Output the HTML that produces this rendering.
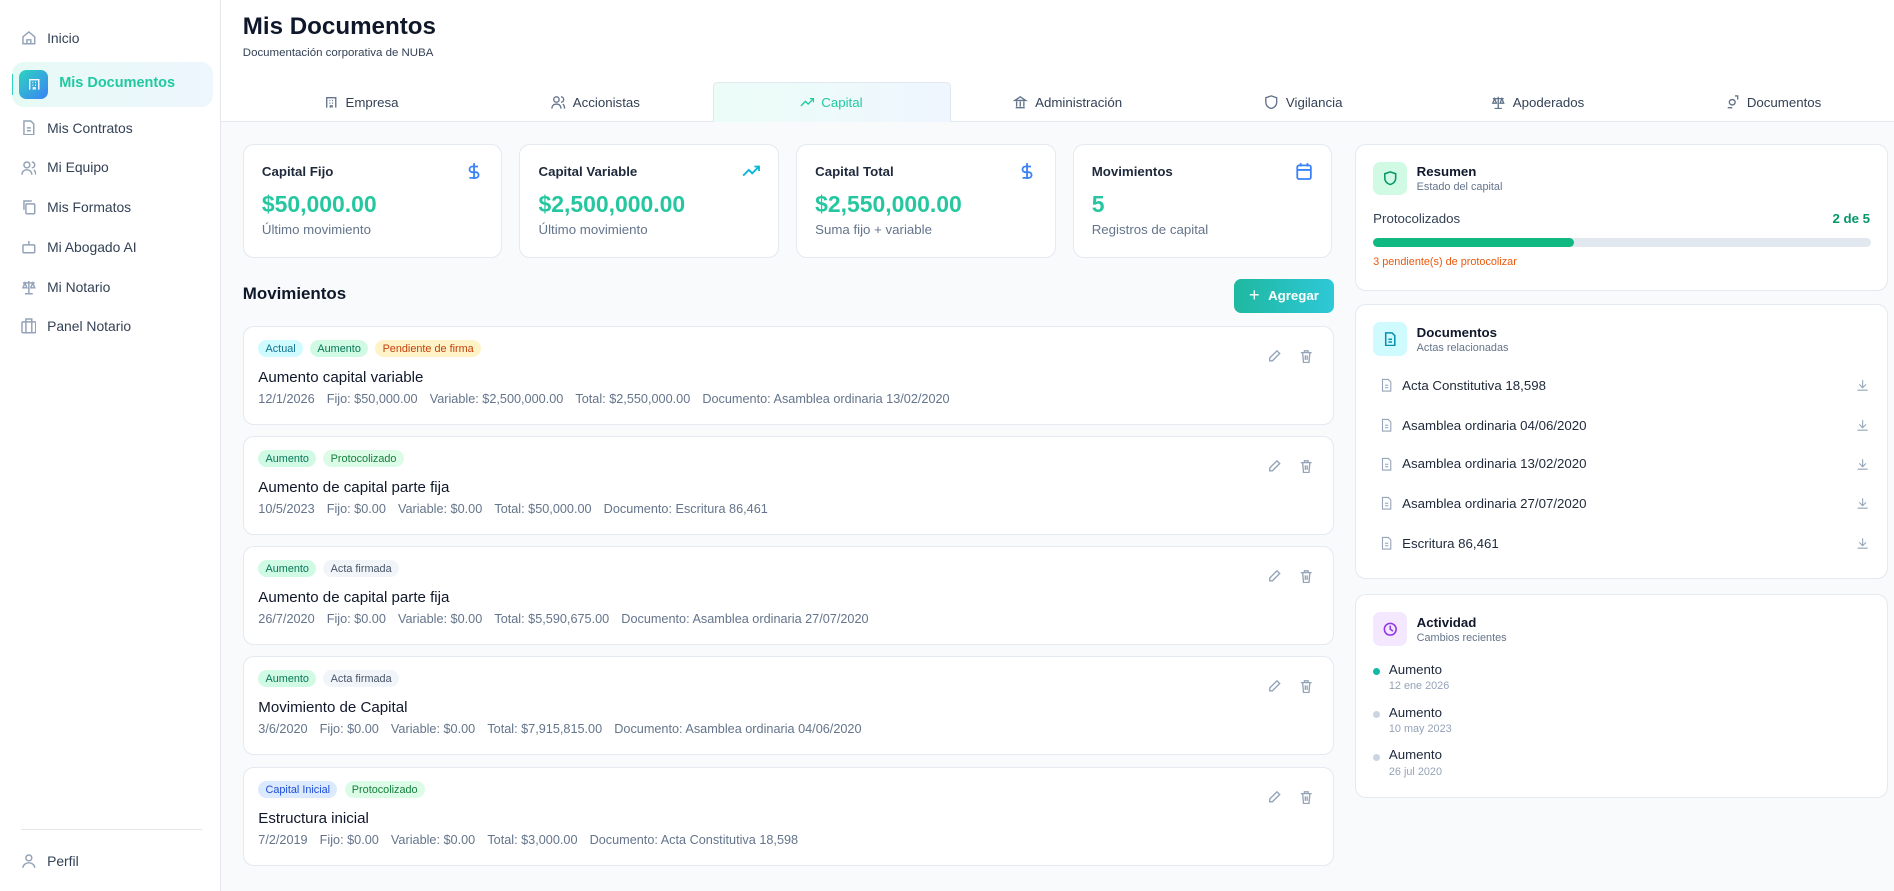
<!DOCTYPE html>
<html><head><meta charset="utf-8"><style>
*{box-sizing:border-box;margin:0;padding:0}
html,body{width:1894px;height:891px;overflow:hidden;background:#f8fafc}
body{font-family:"Liberation Sans",Arial,sans-serif;color:#0f172a}
#r{zoom:1.20791;width:1568px;height:738px;position:relative;background:#f8fafc}
.a{position:absolute}
.side{left:0;top:0;width:183px;height:738px;background:#fff;border-right:1px solid #e5e7eb}
.ni{position:absolute;left:17px;font-size:11.5px;color:#334155;display:flex;align-items:center;gap:9px}
.ni svg{width:13px;height:13px;stroke:#94a3b8;fill:none;stroke-width:1.5}
.hdr{left:183px;top:0;width:1385px;height:101px;background:#fff;border-bottom:1px solid #e2e8f0}
.tab{position:absolute;top:68px;height:33px;width:196px;display:flex;align-items:center;justify-content:center;gap:6px;font-size:11px;color:#334155}
.tab svg{width:12px;height:12px;stroke:#64748b;fill:none;stroke-width:1.5}
.card{position:absolute;background:#fff;border:1px solid #e5e9f0;border-radius:9px}
.st .t{position:absolute;left:15px;top:16px;font-size:11px;font-weight:bold;color:#1e293b}
.st .v{position:absolute;left:15px;top:38px;font-size:19px;font-weight:bold;color:#26c7a0}
.st .s{position:absolute;left:15px;top:64px;font-size:11px;color:#64748b}
.st svg{position:absolute;right:15px;top:14px;width:15px;height:15px;fill:none;stroke-width:1.6}
.mv .tags{position:absolute;left:12px;top:11px;display:flex;gap:6px}
.tag{font-size:9px;padding:2px 6px;border-radius:8px;line-height:10px}
.mv .ti{position:absolute;left:12px;top:35px;font-size:12.5px;color:#0f172a}
.mv .d{position:absolute;left:12px;top:54px;font-size:10.5px;color:#64748b}
.mv .d span{margin-right:10px}
.mv .ic{position:absolute;right:16px;top:18px;display:flex;gap:14px}
.mv .ic svg{width:12px;height:12px;stroke:#94a3b8;fill:none;stroke-width:1.5}
.rh{position:absolute;left:14px;top:14px;width:28px;height:28px;border-radius:6px;display:flex;align-items:center;justify-content:center}
.rh svg{width:12px;height:12px;fill:none;stroke-width:1.7}
.rt{position:absolute;left:50px;top:16px;font-size:11px;font-weight:bold}
.rs{position:absolute;left:50px;top:30px;font-size:9px;color:#64748b}
.doc{position:absolute;left:20px;font-size:11px;color:#1e293b;display:flex;align-items:center;gap:7px;width:405px}
.doc svg{width:11px;height:12px;stroke:#94a3b8;fill:none;stroke-width:1.3}
.doc .dl{position:absolute;right:0}
.act{position:absolute;left:14px}
.act i{position:absolute;left:0;top:5px;width:6px;height:6px;border-radius:3px}
.act b{position:absolute;left:13px;top:0;font-weight:normal;font-size:11px;color:#1e293b;white-space:nowrap}
.act s{position:absolute;left:13px;top:15px;text-decoration:none;font-size:9px;color:#94a3b8;white-space:nowrap}
</style></head><body><div id="r">
<div class="a side">
 <div class="ni" style="top:25px"><svg viewBox="0 0 16 16"><path d="M2 7l6-5 6 5v7H2z M6 14v-4h4v4"/></svg>Inicio</div>
 <div class="a" style="left:10px;top:51px;width:166px;height:38px;border-radius:10px;background:linear-gradient(90deg,#e6faf5,#eef6fe)"></div>
 <div class="a" style="left:10px;top:61px;width:1px;height:18px;background:#2dd4bf"></div>
 <div class="a" style="left:16px;top:58px;width:24px;height:24px;border-radius:6px;background:linear-gradient(135deg,#2dd4bf,#3b82f6)"><svg viewBox="0 0 16 16" style="position:absolute;left:6px;top:6px;width:12px;height:12px;fill:none;stroke:#fff;stroke-width:1.5"><path d="M3 14V3h10v11M6 6h1M9 6h1M6 9h1M9 9h1M7 14v-2h2v2"/></svg></div>
 <div class="a" style="left:49px;top:62px;font-size:12px;font-weight:bold;color:#20c9a0">Mis Documentos</div>
 <div class="ni" style="top:99px"><svg viewBox="0 0 16 16"><path d="M3 1h7l3 3v11H3z M6 8h4M6 11h4"/></svg>Mis Contratos</div>
 <div class="ni" style="top:132px"><svg viewBox="0 0 16 16"><circle cx="6" cy="5" r="3"/><path d="M1 15c0-3 2-5 5-5s5 2 5 5M11 2a3 3 0 010 6M13 10c1.5 1 2 3 2 5"/></svg>Mi Equipo</div>
 <div class="ni" style="top:165px"><svg viewBox="0 0 16 16"><rect x="5" y="5" width="9" height="10" rx="1"/><path d="M3 11V2h8"/></svg>Mis Formatos</div>
 <div class="ni" style="top:198px"><svg viewBox="0 0 16 16"><rect x="2" y="6" width="12" height="8" rx="1"/><path d="M8 6V2M6 10h0M10 10h0"/></svg>Mi Abogado AI</div>
 <div class="ni" style="top:231px"><svg viewBox="0 0 16 16"><path d="M8 2v13M4 15h8M2 4h12M4 4l-2 5h4zM12 4l-2 5h4z"/></svg>Mi Notario</div>
 <div class="ni" style="top:263px"><svg viewBox="0 0 16 16"><rect x="1" y="4" width="14" height="11" rx="1"/><path d="M5 4V1h6v3M5 4v11M11 4v11"/></svg>Panel Notario</div>
 <div class="a" style="left:17px;top:686px;width:150px;height:1px;background:#e5e7eb"></div>
 <div class="ni" style="top:706px"><svg viewBox="0 0 16 16"><circle cx="8" cy="5" r="3"/><path d="M2 15c0-3 3-5 6-5s6 2 6 5"/></svg>Perfil</div>
</div>
<div class="a hdr"></div>
<div class="a" style="left:201px;top:11px;font-size:20px;font-weight:bold;color:#0f172a">Mis Documentos</div>
<div class="a" style="left:201px;top:39px;font-size:9.5px;color:#334155">Documentación corporativa de NUBA</div>
<div class="a" style="left:590px;top:68px;width:197px;height:33px;border:1px solid #e2e8f0;border-bottom:none;border-radius:4px 4px 0 0;background:linear-gradient(90deg,#ecfdf7,#eff6ff)"></div>
<div class="tab" style="left:201px"><svg viewBox="0 0 16 16"><path d="M3 14V3h10v11M6 6h1M9 6h1M6 9h1M9 9h1M7 14v-2h2v2"/></svg>Empresa</div>
<div class="tab" style="left:395px"><svg viewBox="0 0 16 16"><circle cx="6" cy="5" r="3"/><path d="M1 15c0-3 2-5 5-5s5 2 5 5M11 2a3 3 0 010 6M13 10c1.5 1 2 3 2 5"/></svg>Accionistas</div>
<div class="tab" style="left:590px;color:#20c9a0"><svg viewBox="0 0 16 16" style="stroke:#20c9a0"><path d="M1 12l5-5 3 3 6-6M11 4h4v4"/></svg>Capital</div>
<div class="tab" style="left:786px"><svg viewBox="0 0 16 16"><path d="M2 6l6-4 6 4zM3 14h10M4 7v6M8 7v6M12 7v6"/></svg>Administración</div>
<div class="tab" style="left:981px"><svg viewBox="0 0 16 16"><path d="M8 1l6 2v5c0 4-3 6-6 7-3-1-6-3-6-7V3z"/></svg>Vigilancia</div>
<div class="tab" style="left:1175px"><svg viewBox="0 0 16 16"><path d="M8 2v13M4 15h8M2 4h12M4 4l-2 5h4zM12 4l-2 5h4z"/></svg>Apoderados</div>
<div class="tab" style="left:1370px"><svg viewBox="0 0 16 16"><path d="M6 10a3 3 0 100-4M10 6a3 3 0 100 4M3 14h5M11 1h3v4"/></svg>Documentos</div>

<div class="card st" style="left:201px;top:119px;width:215px;height:95px"><div class="t">Capital Fijo</div><svg viewBox="0 0 16 16" stroke="#3b82f6"><path d="M8 1v14M11.5 4H6.5a2.5 2.5 0 000 5h3a2.5 2.5 0 010 5H4"/></svg><div class="v">$50,000.00</div><div class="s">Último movimiento</div></div>
<div class="card st" style="left:430px;top:119px;width:215px;height:95px"><div class="t">Capital Variable</div><svg viewBox="0 0 16 16" stroke="#06b6d4"><path d="M1 12l5-5 3 3 6-6M11 4h4v4"/></svg><div class="v">$2,500,000.00</div><div class="s">Último movimiento</div></div>
<div class="card st" style="left:659px;top:119px;width:215px;height:95px"><div class="t">Capital Total</div><svg viewBox="0 0 16 16" stroke="#3b82f6"><path d="M8 1v14M11.5 4H6.5a2.5 2.5 0 000 5h3a2.5 2.5 0 010 5H4"/></svg><div class="v">$2,550,000.00</div><div class="s">Suma fijo + variable</div></div>
<div class="card st" style="left:888px;top:119px;width:215px;height:95px"><div class="t">Movimientos</div><svg viewBox="0 0 16 16" stroke="#3b82f6"><rect x="2" y="3" width="12" height="12" rx="1.5"/><path d="M2 7h12M5 1v3M11 1v3"/></svg><div class="v">5</div><div class="s">Registros de capital</div></div>

<div class="a" style="left:201px;top:235px;font-size:14px;font-weight:bold">Movimientos</div>
<div class="a" style="left:1022px;top:231px;width:82px;height:28px;border-radius:6px;background:linear-gradient(90deg,#1fb8a0,#2ec8d8);color:#fff;font-size:11px;font-weight:bold;display:flex;align-items:center;justify-content:center;gap:7px"><span style="font-size:15px;font-weight:normal">+</span>Agregar</div>

<div class="card mv" style="left:201px;top:270px;width:903px;height:82px"><div class="tags"><span class="tag" style="background:#cffafe;color:#0e7490">Actual</span><span class="tag" style="background:#d1fae5;color:#047857">Aumento</span><span class="tag" style="background:#fef3c7;color:#c2410c">Pendiente de firma</span></div><div class="ti">Aumento capital variable</div><div class="d"><span>12/1/2026</span><span>Fijo: $50,000.00</span><span>Variable: $2,500,000.00</span><span>Total: $2,550,000.00</span><span>Documento: Asamblea ordinaria 13/02/2020</span></div><div class="ic"><svg viewBox="0 0 16 16"><path d="M11 2l3 3-8 8H3v-3z"/></svg><svg viewBox="0 0 16 16"><path d="M2 4h12M6 4V2h4v2M4 4l1 11h6l1-11M7 7v5M9 7v5"/></svg></div></div>
<div class="card mv" style="left:201px;top:361px;width:903px;height:82px"><div class="tags"><span class="tag" style="background:#d1fae5;color:#047857">Aumento</span><span class="tag" style="background:#dcfce7;color:#15803d">Protocolizado</span></div><div class="ti">Aumento de capital parte fija</div><div class="d"><span>10/5/2023</span><span>Fijo: $0.00</span><span>Variable: $0.00</span><span>Total: $50,000.00</span><span>Documento: Escritura 86,461</span></div><div class="ic"><svg viewBox="0 0 16 16"><path d="M11 2l3 3-8 8H3v-3z"/></svg><svg viewBox="0 0 16 16"><path d="M2 4h12M6 4V2h4v2M4 4l1 11h6l1-11M7 7v5M9 7v5"/></svg></div></div>
<div class="card mv" style="left:201px;top:452px;width:903px;height:82px"><div class="tags"><span class="tag" style="background:#d1fae5;color:#047857">Aumento</span><span class="tag" style="background:#f1f5f9;color:#475569">Acta firmada</span></div><div class="ti">Aumento de capital parte fija</div><div class="d"><span>26/7/2020</span><span>Fijo: $0.00</span><span>Variable: $0.00</span><span>Total: $5,590,675.00</span><span>Documento: Asamblea ordinaria 27/07/2020</span></div><div class="ic"><svg viewBox="0 0 16 16"><path d="M11 2l3 3-8 8H3v-3z"/></svg><svg viewBox="0 0 16 16"><path d="M2 4h12M6 4V2h4v2M4 4l1 11h6l1-11M7 7v5M9 7v5"/></svg></div></div>
<div class="card mv" style="left:201px;top:543px;width:903px;height:82px"><div class="tags"><span class="tag" style="background:#d1fae5;color:#047857">Aumento</span><span class="tag" style="background:#f1f5f9;color:#475569">Acta firmada</span></div><div class="ti">Movimiento de Capital</div><div class="d"><span>3/6/2020</span><span>Fijo: $0.00</span><span>Variable: $0.00</span><span>Total: $7,915,815.00</span><span>Documento: Asamblea ordinaria 04/06/2020</span></div><div class="ic"><svg viewBox="0 0 16 16"><path d="M11 2l3 3-8 8H3v-3z"/></svg><svg viewBox="0 0 16 16"><path d="M2 4h12M6 4V2h4v2M4 4l1 11h6l1-11M7 7v5M9 7v5"/></svg></div></div>
<div class="card mv" style="left:201px;top:635px;width:903px;height:82px"><div class="tags"><span class="tag" style="background:#dbeafe;color:#1d4ed8">Capital Inicial</span><span class="tag" style="background:#dcfce7;color:#15803d">Protocolizado</span></div><div class="ti">Estructura inicial</div><div class="d"><span>7/2/2019</span><span>Fijo: $0.00</span><span>Variable: $0.00</span><span>Total: $3,000.00</span><span>Documento: Acta Constitutiva 18,598</span></div><div class="ic"><svg viewBox="0 0 16 16"><path d="M11 2l3 3-8 8H3v-3z"/></svg><svg viewBox="0 0 16 16"><path d="M2 4h12M6 4V2h4v2M4 4l1 11h6l1-11M7 7v5M9 7v5"/></svg></div></div>

<div class="card" style="left:1122px;top:119px;width:441px;height:122px">
 <div class="rh" style="background:#d1fae5"><svg viewBox="0 0 16 16" stroke="#059669"><path d="M8 1l6 2v5c0 4-3 6-6 7-3-1-6-3-6-7V3z"/></svg></div>
 <div class="rt">Resumen</div><div class="rs">Estado del capital</div>
 <div class="a" style="left:14px;top:55px;font-size:11px;color:#334155">Protocolizados</div>
 <div class="a" style="right:14px;top:55px;font-size:11px;font-weight:bold;color:#059669">2 de 5</div>
 <div class="a" style="left:14px;top:77px;width:412px;height:8px;border-radius:4px;background:#e2e8f0"><div style="width:166px;height:8px;border-radius:4px;background:#10b981"></div></div>
 <div class="a" style="left:14px;top:92px;font-size:9px;color:#ea580c">3 pendiente(s) de protocolizar</div>
</div>
<div class="card" style="left:1122px;top:252px;width:441px;height:227px">
 <div class="rh" style="background:#cffafe"><svg viewBox="0 0 16 16" stroke="#0891b2"><path d="M3 1h7l3 3v11H3z M6 8h4M6 11h4"/></svg></div>
 <div class="rt">Documentos</div><div class="rs">Actas relacionadas</div>
 <div class="doc" style="top:60px"><svg viewBox="0 0 16 16"><path d="M3 1h7l3 3v11H3z M6 8h4M6 11h4"/></svg>Acta Constitutiva 18,598<svg class="dl" viewBox="0 0 16 16"><path d="M8 2v9M4 7l4 4 4-4M2 14h12"/></svg></div>
 <div class="doc" style="top:93px"><svg viewBox="0 0 16 16"><path d="M3 1h7l3 3v11H3z M6 8h4M6 11h4"/></svg>Asamblea ordinaria 04/06/2020<svg class="dl" viewBox="0 0 16 16"><path d="M8 2v9M4 7l4 4 4-4M2 14h12"/></svg></div>
 <div class="doc" style="top:125px"><svg viewBox="0 0 16 16"><path d="M3 1h7l3 3v11H3z M6 8h4M6 11h4"/></svg>Asamblea ordinaria 13/02/2020<svg class="dl" viewBox="0 0 16 16"><path d="M8 2v9M4 7l4 4 4-4M2 14h12"/></svg></div>
 <div class="doc" style="top:158px"><svg viewBox="0 0 16 16"><path d="M3 1h7l3 3v11H3z M6 8h4M6 11h4"/></svg>Asamblea ordinaria 27/07/2020<svg class="dl" viewBox="0 0 16 16"><path d="M8 2v9M4 7l4 4 4-4M2 14h12"/></svg></div>
 <div class="doc" style="top:191px"><svg viewBox="0 0 16 16"><path d="M3 1h7l3 3v11H3z M6 8h4M6 11h4"/></svg>Escritura 86,461<svg class="dl" viewBox="0 0 16 16"><path d="M8 2v9M4 7l4 4 4-4M2 14h12"/></svg></div>
</div>
<div class="card" style="left:1122px;top:492px;width:441px;height:169px">
 <div class="rh" style="background:#f3e8ff"><svg viewBox="0 0 16 16" stroke="#9333ea"><circle cx="8" cy="8" r="6.5"/><path d="M8 4v4l3 2"/></svg></div>
 <div class="rt">Actividad</div><div class="rs">Cambios recientes</div>
 <div class="act" style="top:55px"><i style="background:#14b8a6"></i><b>Aumento</b><s>12 ene 2026</s></div>
 <div class="act" style="top:91px"><i style="background:#cbd5e1"></i><b>Aumento</b><s>10 may 2023</s></div>
 <div class="act" style="top:126px"><i style="background:#cbd5e1"></i><b>Aumento</b><s>26 jul 2020</s></div>
</div>
</div></body></html>
